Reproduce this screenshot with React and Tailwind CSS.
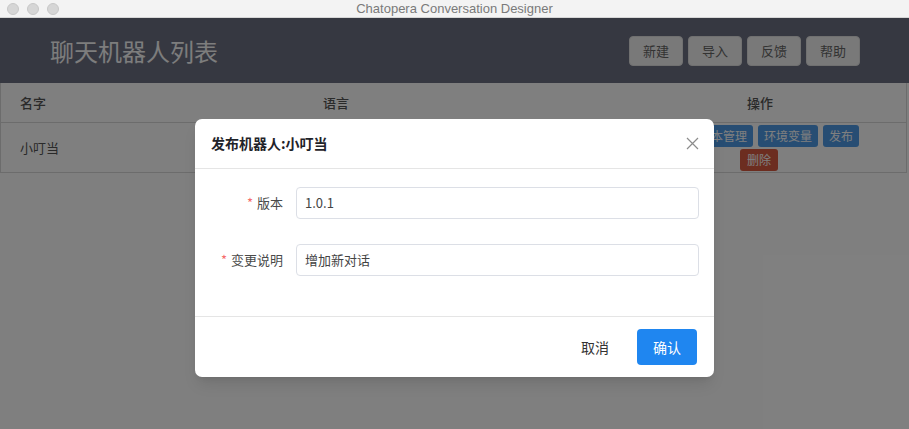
const font = { fontFamily: '"Noto Sans CJK SC", "Noto Sans", sans-serif' }

function HeaderButton({ children }) {
  return (
    <button className="h-[30px] w-[54px] rounded-[4px] border border-[#e0e0e0] bg-[#f2f2f2] text-[13px] text-[#666]">
      {children}
    </button>
  )
}

function Field({ label, value }) {
  return (
    <div className="flex items-center">
      <div className="w-[101px] shrink-0 pr-[13px] text-right text-[13px] text-[#4a4a4a]">
        <span className="mr-[4px] text-[#f56c6c]">*</span>
        {label}
      </div>
      <div className="flex h-[32px] w-[403px] items-center rounded-[4px] border border-[#dcdfe6] px-[8px] text-[13px] text-[#444]">
        {value}
      </div>
    </div>
  )
}

export default function App() {
  return (
    <div className="flex h-[429px] w-[909px] flex-col overflow-hidden bg-white" style={font}>
      <div className="relative flex h-[18px] shrink-0 items-center justify-center border-b border-[#d6d6d6] bg-[#f3f3f3]">
        <div className="absolute left-[7px] top-[3px] flex gap-[8px]">
          <span className="h-[12px] w-[12px] rounded-full border border-[#c8c8c8] bg-[#d6d6d6]" />
          <span className="h-[12px] w-[12px] rounded-full border border-[#c8c8c8] bg-[#d6d6d6]" />
          <span className="h-[12px] w-[12px] rounded-full border border-[#c8c8c8] bg-[#d6d6d6]" />
        </div>
        <span className="text-[13px] leading-none text-[#7a7a7a]" style={{ fontFamily: '"Liberation Sans", Arial, sans-serif' }}>
          Chatopera Conversation Designer
        </span>
      </div>

      <div className="relative flex-1">
        <div className="flex h-[65px] items-center justify-between bg-[#6c7082] pl-[50px] pr-[49px]">
          <h1 className="text-[24px] font-normal text-[#fafafa]">聊天机器人列表</h1>
          <div className="flex gap-[5px]">
            <HeaderButton>新建</HeaderButton>
            <HeaderButton>导入</HeaderButton>
            <HeaderButton>反馈</HeaderButton>
            <HeaderButton>帮助</HeaderButton>
          </div>
        </div>

        <div className="mr-[2px] border-x border-b border-[#d8d8d8] text-[13px] text-[#555]">
          <div className="grid h-[40px] grid-cols-[302px_348px_1fr] items-center border-b border-[#d8d8d8] font-medium">
            <div className="pl-[19px]">名字</div>
            <div className="pl-[20px]">语言</div>
            <div className="pl-[96px]">操作</div>
          </div>
          <div className="grid h-[49px] grid-cols-[302px_348px_1fr] items-center">
            <div className="pl-[19px]">小叮当</div>
            <div />
            <div className="flex flex-col gap-[2px] text-[12px] text-white">
              <div className="ml-[42px] flex gap-[5px]">
                <span className="flex h-[22px] items-center rounded-[3px] bg-[#4f9be6] px-[6px]">版本管理</span>
                <span className="flex h-[22px] items-center rounded-[3px] bg-[#4f9be6] px-[6px]">环境变量</span>
                <span className="flex h-[22px] items-center rounded-[3px] bg-[#4f9be6] px-[6px]">发布</span>
              </div>
              <div className="ml-[89px] flex">
                <span className="flex h-[22px] items-center rounded-[3px] bg-[#d85a40] px-[7px]">删除</span>
              </div>
            </div>
          </div>
        </div>

        <div className="absolute inset-0 bg-black/50" />

        <div className="absolute left-[195px] top-[101px] w-[519px] rounded-[7px] bg-white shadow-lg">
          <div className="flex h-[50px] items-center justify-between border-b border-[#e5e5e5] pl-[16px] pr-[15px]">
            <span className="text-[14px] font-bold text-[#1f2329]">发布机器人:小叮当</span>
            <svg width="13" height="13" viewBox="0 0 13 13" fill="none" stroke="#8c8c8c" strokeWidth="1.2">
              <path d="M1 1l11 11M12 1L1 12" />
            </svg>
          </div>
          <div className="flex flex-col gap-[25px] pb-[40px] pt-[18px]">
            <Field label="版本" value="1.0.1" />
            <Field label="变更说明" value="增加新对话" />
          </div>
          <div className="flex h-[61px] items-center justify-end gap-[28px] border-t border-[#e5e5e5] pr-[17px]">
            <button className="text-[14px] text-[#333]">取消</button>
            <button className="h-[36px] w-[60px] rounded-[4px] bg-[#1f86f0] text-[14px] text-white">确认</button>
          </div>
        </div>
      </div>
    </div>
  )
}
